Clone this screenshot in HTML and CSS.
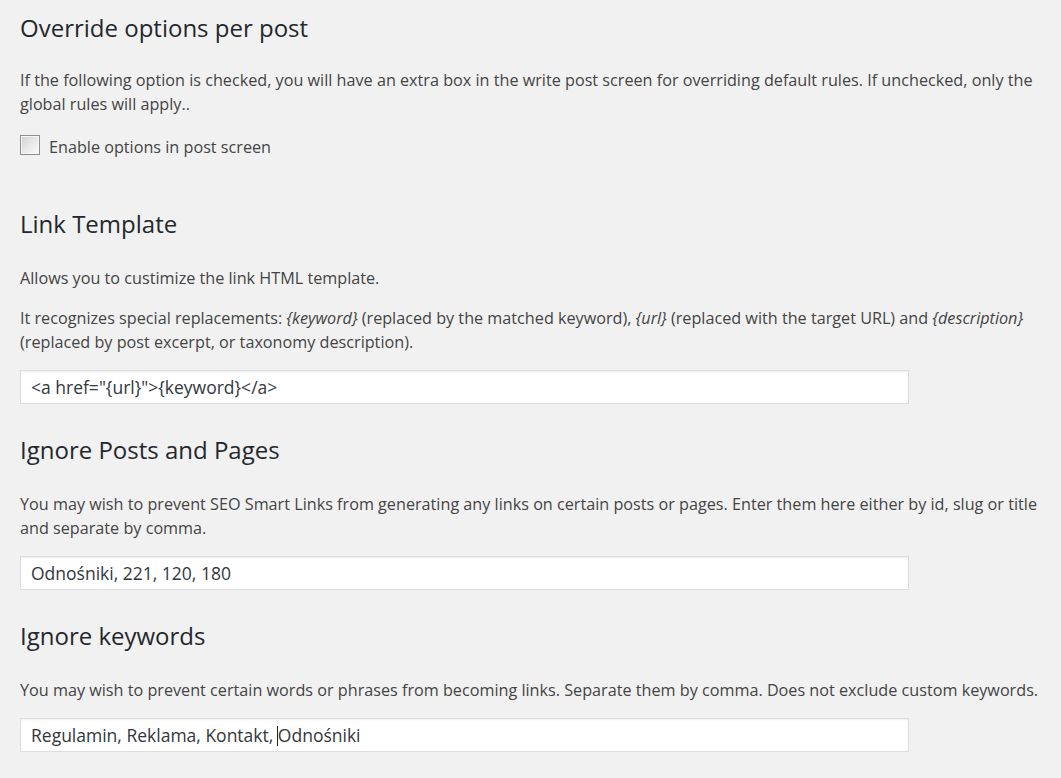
FILE: index.html
```html
<!DOCTYPE html>
<html lang="en">
<head>
<meta charset="utf-8">
<title>Settings</title>
<link rel="stylesheet" href="styles.css">
</head>
<body>
<div class="wrap">
  <h2 class="first">Override options per post</h2>
  <p>If the following option is checked, you will have an extra box in the write post screen for overriding default rules. If unchecked, only the global rules will apply..</p>
  <label class="check-row"><span class="checkbox"></span><span>Enable options in post screen</span></label>

  <h2 class="after-check">Link Template</h2>
  <p>Allows you to custimize the link HTML template.</p>
  <p class="before-field">It recognizes special replacements: <em>{keyword}</em> (replaced by the matched keyword), <em>{url}</em> (replaced with the target URL) and <em>{description}</em> (replaced by post excerpt, or taxonomy description).</p>
  <div class="field">&lt;a href="{url}"&gt;{keyword}&lt;/a&gt;</div>

  <h2>Ignore Posts and Pages</h2>
  <p class="before-field">You may wish to prevent SEO Smart Links from generating any links on certain posts or pages. Enter them here either by id, slug or title and separate by comma.</p>
  <div class="field">Odnośniki, 221, 120, 180</div>

  <h2>Ignore keywords</h2>
  <p class="before-field">You may wish to prevent certain words or phrases from becoming links. Separate them by comma. Does not exclude custom keywords.</p>
  <div class="field">Regulamin, Reklama, Kontakt, <span class="caret"></span>Odnośniki</div>
</div>
</body>
</html>
```

FILE: styles.css
```css
html, body {
  margin: 0;
  padding: 0;
  background: #f1f1f1;
}
body {
  font-family: "Open Sans", "Liberation Sans", sans-serif;
  color: #444;
  font-size: 16.2px;
}
.wrap {
  padding: 0 10px 0 20px;
}
h2 {
  font-size: 24px;
  font-weight: 400;
  line-height: 30px;
  color: #23282d;
  margin: 31px 0 27px;
}
h2.first {
  margin-top: 13px;
  margin-bottom: 25px;
}
h2.after-check {
  margin-top: 50px;
}
p {
  margin: 0 0 16px;
  line-height: 24px;
}
p.before-field {
  margin-bottom: 16px;
}
em {
  font-style: italic;
}
.check-row {
  display: flex;
  align-items: center;
  gap: 9px;
  line-height: 24px;
  margin-top: 19px;
}
.checkbox {
  width: 18px;
  height: 18px;
  border: 1px solid #8e8e8e;
  background: linear-gradient(135deg, #cfcfcf 0%, #e8e8e8 50%, #fafafa 100%);
  box-shadow: inset 0 0 0 1px #f6f6f6;
  margin-top: -4px;
}
.field {
  box-sizing: border-box;
  width: 889px;
  height: 34px;
  border: 1px solid #ddd;
  background: #fff;
  box-shadow: inset 0 1px 2px rgba(0,0,0,.07);
  padding: 0 10px;
  font-size: 17.5px;
  line-height: 32px;
  color: #32373c;
}
.caret {
  display: inline-block;
  width: 1px;
  height: 20px;
  background: #222;
  vertical-align: -4px;
  margin-left: -1px;
}
```
